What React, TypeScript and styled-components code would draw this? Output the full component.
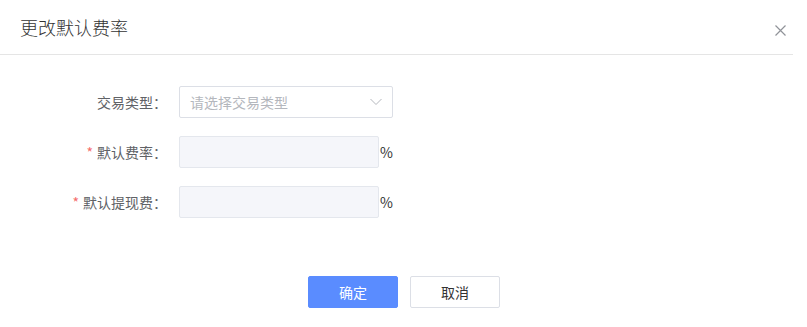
import React from "react";
import styled, { createGlobalStyle } from "styled-components";

const Global = createGlobalStyle`
  html, body { margin: 0; padding: 0; background: #fff; }
  body { font-family: "Noto Sans CJK SC", "Noto Sans", sans-serif; color: #333; }
`;

const Modal = styled.div`
  width: 793px;
  background: #fff;
`;

const Header = styled.div`
  height: 54px;
  display: flex;
  align-items: center;
  justify-content: space-between;
  padding: 0 20px;
  border-bottom: 1px solid #e5e5e5;
`;

const Title = styled.div`
  font-size: 18px;
  font-weight: 300;
  color: #333;
  line-height: 22px;
  margin-top: 0;
`;

const Close = styled.button`
  border: 0;
  background: none;
  padding: 0;
  margin-right: -14px;
  margin-top: 6px;
  width: 14px;
  height: 14px;
  display: flex;
  align-items: center;
  justify-content: center;
  cursor: pointer;
`;

const Body = styled.div`
  padding-top: 31px;
  display: flex;
  flex-direction: column;
  gap: 18px;
`;

const Row = styled.div`
  display: flex;
  align-items: center;
  height: 32px;
`;

const Label = styled.label<{ $required?: boolean }>`
  width: 179px;
  box-sizing: border-box;
  padding-right: 12px;
  text-align: right;
  font-size: 14px;
  color: #606266;
  &::before {
    content: ${(p) => (p.$required ? '"*"' : '""')};
    color: #f56c6c;
    margin-right: 4px;
  }
`;

const Select = styled.div`
  width: 214px;
  height: 32px;
  box-sizing: border-box;
  border: 1px solid #dcdfe6;
  border-radius: 2px;
  display: flex;
  align-items: center;
  justify-content: space-between;
  padding: 0 10px 0 10px;
  font-size: 14px;
  color: #b4b7bd;
`;

const Input = styled.input`
  width: 200px;
  height: 32px;
  box-sizing: border-box;
  border: 1px solid #e4e7ed;
  border-radius: 2px;
  background: #f5f6fa;
  outline: none;
  font-size: 14px;
  padding: 0 10px;
`;

const Unit = styled.span`
  font-size: 14px;
  color: #333;
  margin-left: 1px;
`;

const Footer = styled.div`
  display: flex;
  justify-content: center;
  gap: 12px;
  margin-top: 58px;
  padding-left: 15px;
`;

const Button = styled.button<{ $primary?: boolean }>`
  width: 90px;
  height: 32px;
  border-radius: 2px;
  font-family: inherit;
  font-size: 14px;
  border: 1px solid ${(p) => (p.$primary ? "#5a8cff" : "#dcdfe6")};
  background: ${(p) => (p.$primary ? "#5a8cff" : "#fff")};
  color: ${(p) => (p.$primary ? "#fff" : "#333")};
  cursor: pointer;
`;

export default function App() {
  return (
    <>
      <Global />
      <Modal>
        <Header>
          <Title>更改默认费率</Title>
          <Close aria-label="close">
            <svg width="11" height="11" viewBox="0 0 11 11">
              <path d="M0.5 0.5L10.5 10.5M10.5 0.5L0.5 10.5" stroke="#909399" strokeWidth="1.2" fill="none" />
            </svg>
          </Close>
        </Header>
        <Body>
          <Row>
            <Label>交易类型：</Label>
            <Select>
              <span>请选择交易类型</span>
              <svg width="12" height="8" viewBox="0 0 12 8">
                <path d="M0.5 1L6 6.5L11.5 1" stroke="#b4b7bd" strokeWidth="1" fill="none" />
              </svg>
            </Select>
          </Row>
          <Row>
            <Label $required>默认费率：</Label>
            <Input />
            <Unit>%</Unit>
          </Row>
          <Row>
            <Label $required>默认提现费：</Label>
            <Input />
            <Unit>%</Unit>
          </Row>
        </Body>
        <Footer>
          <Button $primary>确定</Button>
          <Button>取消</Button>
        </Footer>
      </Modal>
    </>
  );
}
